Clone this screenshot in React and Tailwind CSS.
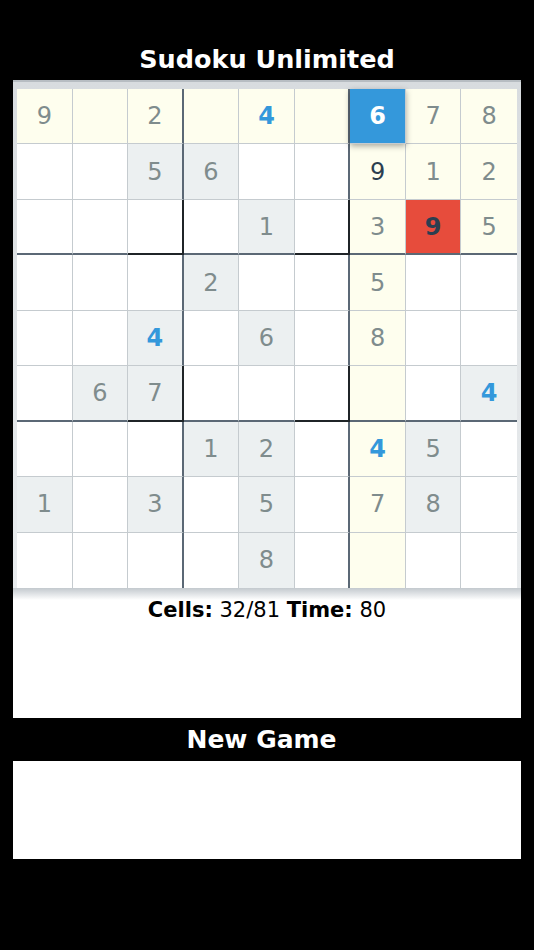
import React from 'react';

// g = given, h = hint (blue bold), u = user (dark), s = selected, e = error
const BOARD = [
  ['9g', '', '2g', '', '4h', '', '6s', '7g', '8g'],
  ['', '', '5g', '6g', '', '', '9u', '1g', '2g'],
  ['', '', '', '', '1g', '', '3g', '9e', '5g'],
  ['', '', '', '2g', '', '', '5g', '', ''],
  ['', '', '4h', '', '6g', '', '8g', '', ''],
  ['', '6g', '7g', '', '', '', '', '', '4h'],
  ['', '', '', '1g', '2g', '', '4h', '5g', ''],
  ['1g', '', '3g', '', '5g', '', '7g', '8g', ''],
  ['', '', '', '', '8g', '', '', '', ''],
];

const SEL = { r: 0, c: 6 };

function isPeer(r, c) {
  if (r === SEL.r || c === SEL.c) return true;
  return Math.floor(r / 3) === Math.floor(SEL.r / 3) && Math.floor(c / 3) === Math.floor(SEL.c / 3);
}

function Cell({ r, c, v }) {
  const digit = v ? v[0] : '';
  const kind = v ? v[1] : '';

  let bg = 'bg-white';
  if (kind === 'g' || kind === 'h') bg = 'bg-[#ecf0f1]';
  if (isPeer(r, c)) bg = 'bg-[#fefeee]';
  if (kind === 's') bg = 'bg-[#3498db]';
  if (kind === 'e') bg = 'bg-[#e74c3c]';

  let text = 'text-[#7f8c8d] font-normal';
  if (kind === 'h') text = 'text-[#3498db] font-bold';
  if (kind === 'u') text = 'text-[#2c3e50] font-normal';
  if (kind === 's') text = 'text-white font-bold';
  if (kind === 'e') text = 'text-[#2c3e50] font-bold';

  const boxRight = c % 3 === 2 && c < 8;
  const boxBottom = r % 3 === 2 && r < 8;
  const corner = boxRight && boxBottom;

  let right = c < 8 ? 'border-r border-r-[#c5cbcf]' : '';
  if (boxRight) right = corner ? 'border-r-2 border-r-[#1f2427]' : 'border-r-2 border-r-[#5b6875]';
  let bottom = r < 8 ? 'border-b border-b-[#c5cbcf]' : '';
  if (boxBottom) bottom = corner ? 'border-b-2 border-b-[#1f2427]' : 'border-b-2 border-b-[#5b6875]';

  return (
    <div
      className={`flex items-center justify-center text-[24px] ${bg} ${text} ${right} ${bottom} ${
        kind === 's' ? 'relative z-10 shadow-[0_2px_6px_rgba(0,0,0,0.35)]' : ''
      }`}
    >
      {digit}
    </div>
  );
}

export default function App() {
  return (
    <div className="min-h-[950px] bg-black font-['DejaVu_Sans',sans-serif]">
      {/* title */}
      <div className="h-[80px] pt-[44px]">
        <h1 className="text-center text-[25.5px] font-bold leading-[30px] text-white">
          Sudoku Unlimited
        </h1>
      </div>

      {/* board panel */}
      <div className="mx-[13px] h-[638px] bg-white">
        <div className="border-t-2 border-t-[#b7bdc2] bg-gradient-to-b from-[#d8dcdf] to-[#e9ecee] px-[4px] pt-[7px]">
          <div className="grid h-[499px] w-[500px] grid-cols-9 grid-rows-9">
            {BOARD.map((row, r) =>
              row.map((v, c) => <Cell key={`${r}-${c}`} r={r} c={c} v={v} />)
            )}
          </div>
        </div>
        <div className="h-[12px] bg-gradient-to-b from-[#c3c9ce] to-white" />
        <p className="text-center text-[21px] leading-[20px] text-black">
          <b>Cells:</b> 32/81 <b>Time:</b> 80
        </p>
      </div>

      {/* new game */}
      <div className="flex h-[43px] items-center justify-center pr-[11px]">
        <h2 className="text-[25px] font-bold text-white">New Game</h2>
      </div>
      <div className="mx-[13px] h-[98px] bg-white" />
    </div>
  );
}
